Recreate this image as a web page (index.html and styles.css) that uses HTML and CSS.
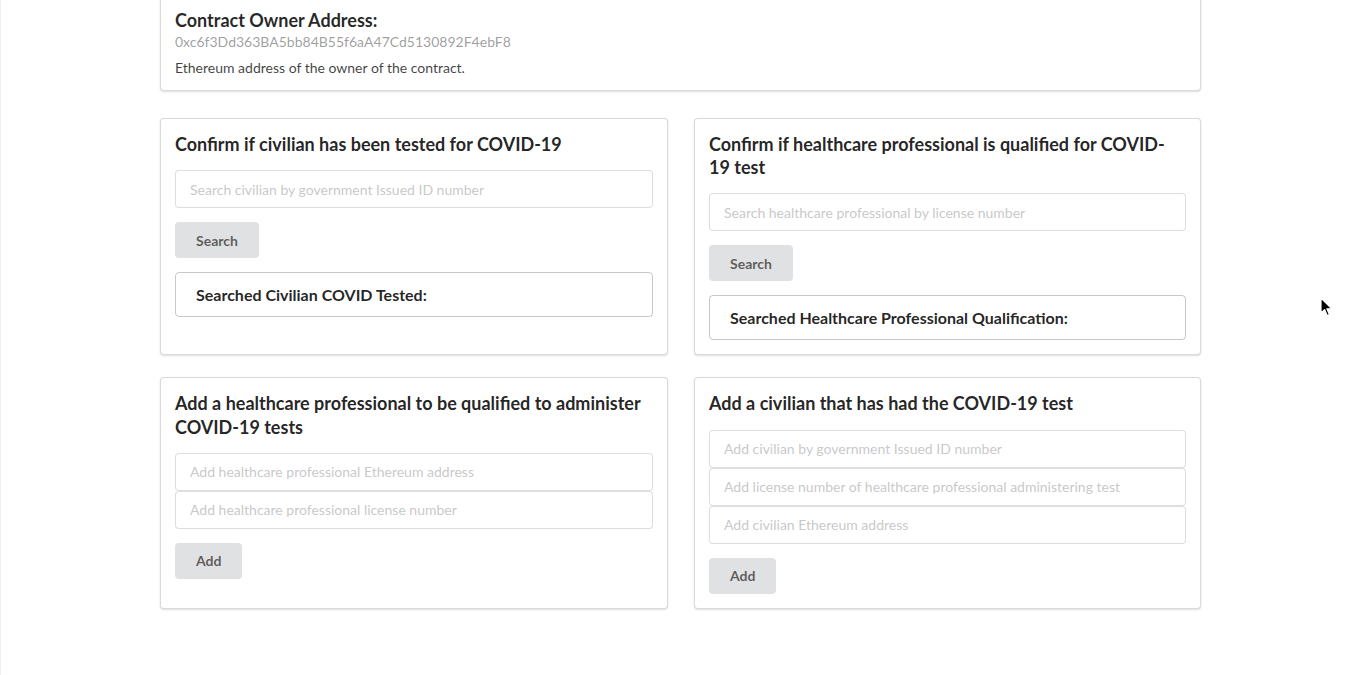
FILE: index.html
```html
<!DOCTYPE html>
<html lang="en">
<head>
<meta charset="utf-8">
<title>COVID-19 Test Registry</title>
<link rel="stylesheet" href="styles.css">
</head>
<body>
<div class="page">
  <div class="container">
    <div class="card top-card">
      <div class="card-header">Contract Owner Address:</div>
      <div class="meta">0xc6f3Dd363BA5bb84B55f6aA47Cd5130892F4ebF8</div>
      <div class="description">Ethereum address of the owner of the contract.</div>
    </div>

    <div class="grid">
      <div class="card segment">
        <h3 class="header">Confirm if civilian has been tested for COVID-19</h3>
        <form class="form">
          <input class="input" type="text" placeholder="Search civilian by government Issued ID number">
          <button class="button" type="button">Search</button>
          <div class="result">Searched Civilian COVID Tested:</div>
        </form>
      </div>

      <div class="card segment">
        <h3 class="header">Confirm if healthcare professional is qualified for COVID-19 test</h3>
        <form class="form">
          <input class="input" type="text" placeholder="Search healthcare professional by license number">
          <button class="button" type="button">Search</button>
          <div class="result">Searched Healthcare Professional Qualification:</div>
        </form>
      </div>

      <div class="card segment">
        <h3 class="header">Add a healthcare professional to be qualified to administer COVID-19 tests</h3>
        <form class="form">
          <div class="stack">
            <input class="input" type="text" placeholder="Add healthcare professional Ethereum address">
            <input class="input" type="text" placeholder="Add healthcare professional license number">
          </div>
          <button class="button" type="button">Add</button>
        </form>
      </div>

      <div class="card segment">
        <h3 class="header">Add a civilian that has had the COVID-19 test</h3>
        <form class="form">
          <div class="stack">
            <input class="input" type="text" placeholder="Add civilian by government Issued ID number">
            <input class="input" type="text" placeholder="Add license number of healthcare professional administering test">
            <input class="input" type="text" placeholder="Add civilian Ethereum address">
          </div>
          <button class="button" type="button">Add</button>
        </form>
      </div>
    </div>
  </div>
</div>
<svg class="cursor" width="14" height="22" viewBox="0 0 14 22" aria-hidden="true">
  <path d="M1 1 L1 16 L4.6 12.6 L7.2 18.6 L9.4 17.6 L6.9 11.8 L11.8 11.8 Z" fill="#000" stroke="#fff" stroke-width="1.2" stroke-linejoin="round"/>
</svg>
</body>
</html>
```

FILE: styles.css
```css
html, body {
  margin: 0;
  padding: 0;
  background: #fff;
}

body {
  font-family: Lato, "Helvetica Neue", Arial, sans-serif;
  font-size: 14px;
  line-height: 1.4285em;
  color: rgba(0, 0, 0, 0.87);
  overflow: hidden;
  height: 675px;
}

.page {
  display: flow-root;
  border-left: 1px solid #efefef;
  height: 675px;
  box-sizing: border-box;
}

.container {
  width: 1041px;
  margin: -5px 0 0 159px;
}

.card {
  background: #fff;
  border: 1px solid rgba(34, 36, 38, 0.17);
  border-radius: 4px;
  box-shadow: 0 1px 2px 0 rgba(34, 36, 38, 0.15);
  box-sizing: border-box;
}

.top-card {
  padding: 13px 14px 12px;
}

.card-header {
  font-weight: 700;
  font-size: 18px;
  line-height: 1.2857em;
  color: rgba(0, 0, 0, 0.85);
}

.meta {
  color: rgba(0, 0, 0, 0.4);
  font-size: 14px;
  line-height: 20px;
}

.description {
  margin-top: 6px;
  font-size: 14px;
  color: rgba(0, 0, 0, 0.75);
  line-height: 20px;
}

.grid {
  display: grid;
  grid-template-columns: 508px 507px;
  column-gap: 26px;
  row-gap: 22px;
  margin-top: 27px;
}

.segment {
  padding: 14px;
}

.header {
  margin: 0 0 14px;
  padding-right: 1px;
  font-size: 18px;
  font-weight: 700;
  line-height: 1.2857em;
  color: rgba(0, 0, 0, 0.87);
}

.form {
  margin: 0;
  display: flex;
  flex-direction: column;
  align-items: flex-start;
}

.stack {
  display: flex;
  flex-direction: column;
  align-self: stretch;
}

.input {
  align-self: stretch;
  box-sizing: border-box;
  height: 38px;
  margin: 0;
  padding: 9px 14px;
  font-family: Lato, "Helvetica Neue", Arial, sans-serif;
  font-size: 14px;
  line-height: 17px;
  color: rgba(0, 0, 0, 0.87);
  background: #fff;
  border: 1px solid rgba(34, 36, 38, 0.15);
  border-radius: 4px;
  outline: none;
}

.input::placeholder {
  color: rgba(191, 191, 191, 0.87);
}

.button {
  margin-top: 14px;
  height: 36px;
  padding: 0 21px;
  font-family: Lato, "Helvetica Neue", Arial, sans-serif;
  font-size: 14px;
  font-weight: 700;
  color: rgba(0, 0, 0, 0.6);
  background: #e0e1e2;
  border: none;
  border-radius: 4px;
}

.result {
  align-self: stretch;
  box-sizing: border-box;
  margin-top: 14px;
  height: 45px;
  padding: 11px 20px;
  font-size: 16px;
  font-weight: 700;
  line-height: 21px;
  border: 1px solid rgba(34, 36, 38, 0.25);
  border-radius: 4px;
  color: rgba(0, 0, 0, 0.87);
}

.cursor {
  position: absolute;
  left: 1320px;
  top: 297px;
}
```
